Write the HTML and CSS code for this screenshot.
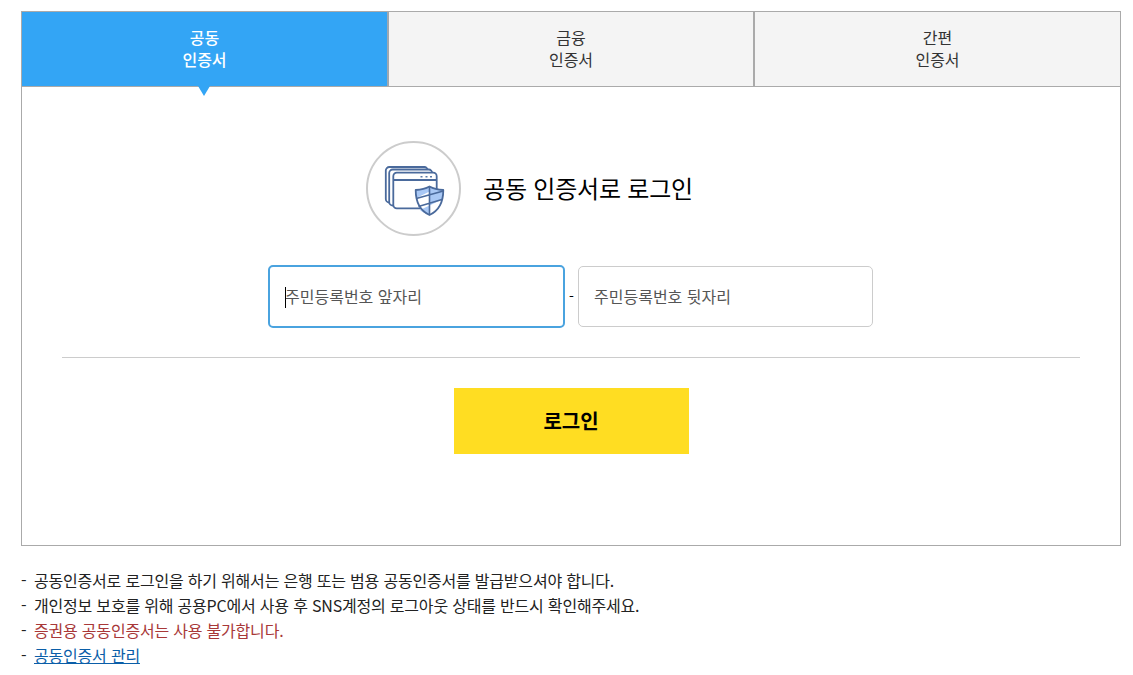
FILE: index.html
```html
<!DOCTYPE html>
<html lang="ko">
<head>
<meta charset="utf-8">
<title>공동 인증서로 로그인</title>
<link rel="stylesheet" href="styles.css">
</head>
<body>
<main class="page">
  <section class="box">
    <nav class="tabs">
      <a class="tab active">공동<br>인증서</a>
      <a class="tab">금융<br>인증서</a>
      <a class="tab">간편<br>인증서</a>
    </nav>
    <div class="panel">
      <div class="heading">
        <span class="badge">
          <svg class="cert-icon" width="62" height="52" viewBox="0 0 62 52" fill="none">
            <rect x="1.8" y="1" width="42" height="35.500" rx="3.500" fill="#fff" stroke="#4a6a9c" stroke-width="1.800"/>
            <rect x="5.200" y="3.500" width="43" height="36" rx="3.500" fill="#fff" stroke="#4a6a9c" stroke-width="1.800"/>
            <rect x="9.300" y="6.700" width="43.400" height="35.600" rx="3.500" fill="#fff" stroke="#4a6a9c" stroke-width="1.800"/>
            <path d="M9.300 14h43.400" stroke="#4a6a9c" stroke-width="2"/>
            <path d="M36.500 10.800h2M41.500 10.800h2M46 10.800h2" stroke="#5a7aa8" stroke-width="1.400"/>
            <path d="M45.500 20.500c-4 2.200-8.500 3.200-13.800 3.500 0 12 4 20.500 13.800 25 9.800-4.500 13.800-13 13.800-25-5.300-.3-9.800-1.300-13.800-3.500z" fill="#fff"/>
            <path d="M45.500 20.500c-4 2.200-8.500 3.200-13.800 3.500 0 3 .2 5.500.7 8l13.100-6.500z" fill="#a9c8f5"/>
            <path d="M45.500 25.500l13.800-1.500c0 4-.4 7-1.200 9.500l-12.600 6z" fill="#a9c8f5"/>
            <path d="M45.500 20.500c4 2.200 8.500 3.200 13.800 3.500v1.500l-13.800 6.500z" fill="#a9c8f5"/>
            <path d="M45.500 39.500 36 44c2.300 2 5.500 3.500 9.500 5z" fill="#a9c8f5"/>
            <path d="M45.500 20.500c-4 2.200-8.500 3.200-13.800 3.500 0 12 4 20.500 13.800 25 9.800-4.500 13.800-13 13.800-25-5.300-.3-9.800-1.300-13.800-3.500z" stroke="#4a6a9c" stroke-width="1.800" stroke-linejoin="round"/>
            <path d="M45.500 20.500V49M32.300 32.500 59.300 25M34.500 40.500 58 33.500" stroke="#4a6a9c" stroke-width="1.600"/>
          </svg>
        </span>
        <h1 class="title">공동 인증서로 로그인</h1>
      </div>
      <form class="fields">
        <span class="focus-wrap">
          <input class="field focused" type="text" placeholder="주민등록번호 앞자리">
          <span class="caret"></span>
        </span>
        <span class="dash">-</span>
        <input class="field" type="password" placeholder="주민등록번호 뒷자리">
      </form>
      <hr class="rule">
      <button class="login" type="button">로그인</button>
    </div>
  </section>
  <ul class="notes">
    <li>공동인증서로 로그인을 하기 위해서는 은행 또는 범용 공동인증서를 발급받으셔야 합니다.</li>
    <li>개인정보 보호를 위해 공용PC에서 사용 후 SNS계정의 로그아웃 상태를 반드시 확인해주세요.</li>
    <li class="warn">증권용 공동인증서는 사용 불가합니다.</li>
    <li><a class="manage" href="#">공동인증서 관리</a></li>
  </ul>
</main>
</body>
</html>
```

FILE: styles.css
```css
* { box-sizing: border-box; }
html, body { margin: 0; padding: 0; background: #fff; overflow: hidden; }
body {
  font-family: "Noto Sans CJK KR", "Noto Sans", sans-serif;
  color: #000;
}
.page { padding: 11px 12px 0 21px; width: 1133px; }
.box { border: 1px solid #aaa; height: 535px; }
.tabs { display: grid; grid-template-columns: 367px 366px 1fr; height: 75px; border-bottom: 1px solid #aaa; }
.tab {
  display: flex; align-items: center; justify-content: center; text-align: center;
  font-size: 16px; line-height: 22px; color: #333; background: #f4f4f4; padding-bottom: 2px;
  border-right: 2px solid #aaa; position: relative;
}
.tab:last-child { border-right: 0; }
.tab.active { background: #33a5f5; color: #fff; font-weight: 500; border-right-color: #9fa8b0; }
.tab.active::after {
  content: ""; position: absolute; left: 176px; top: 100%;
  border-left: 6.500px solid transparent; border-right: 6.500px solid transparent;
  border-top: 10px solid #33a5f5;
}
.panel { display: flex; flex-direction: column; align-items: center; padding: 54px 40px 0; }
.heading { display: flex; align-items: center; gap: 22px; margin-right: 83px; height: 95px; }
.badge {
  flex: none; width: 95px; height: 95px; border: 2px solid #ccc; border-radius: 50%;
  display: flex; align-items: center; justify-content: center; padding: 0;
}
.cert-icon { flex: none; margin: 7px 0 0 2px; }
.title { margin: 0 0 1px; font-size: 24px; font-weight: 400; line-height: 34px; color: #000; letter-spacing: -0.2px; }
.fields { display: flex; align-items: flex-start; margin: 30px 1px 0 0; height: 62px; }
.focus-wrap { position: relative; display: block; height: 62px; }
.field {
  display: block; width: 295px; height: 61px; margin-top: 0; border: 1px solid #ccc; border-radius: 5px; padding: 0 15px 2px;
  font: 400 16px "Noto Sans CJK KR", sans-serif; color: #333; background: #fff; outline: none;
}
.field::placeholder { color: #555; opacity: 1; }
.field.focused { width: 297px; height: 63px; margin-top: -1px; border: 2px solid #4aa3df; }
.caret { position: absolute; left: 17px; top: 21px; width: 1px; height: 21px; background: #000; }
.dash { width: 13px; text-align: center; font-size: 14px; line-height: 60px; color: #000; }
.rule { width: 100%; height: 1px; margin: 29px 0 0; border: 0; background: #ccc; }
.login {
  margin-top: 30px; width: 235px; height: 66px; border: 0; background: #ffdd22; color: #000;
  font: 700 20px "Noto Sans CJK KR", sans-serif; padding: 0 0 2px;
}
.notes { list-style: none; margin: 22px 0 0; padding: 0; font-size: 16px; line-height: 25px; color: #222; letter-spacing: -0.2px; }
.notes li { padding-left: 13px; position: relative; }
.notes li::before { content: "-"; position: absolute; left: 0; color: #222; }
.notes .warn { color: #a83838; }
.manage { color: #0a5ea8; text-decoration: underline; }
```
